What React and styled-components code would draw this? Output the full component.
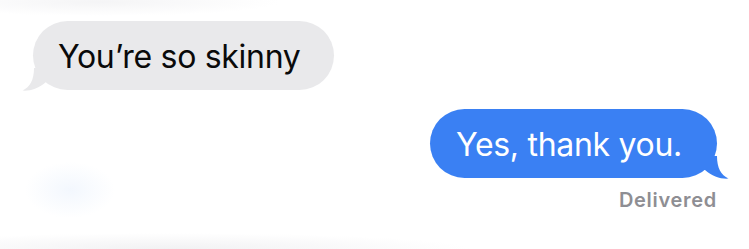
import styled, { createGlobalStyle } from "styled-components";

const GlobalStyle = createGlobalStyle`
  html, body {
    margin: 0;
    padding: 0;
    background: #fff;
  }
  body {
    font-family: Inter, "Open Sans", "Liberation Sans", sans-serif;
    -webkit-font-smoothing: antialiased;
  }
`;

const Thread = styled.div`
  width: 749px;
  height: 249px;
  box-sizing: border-box;
  padding: 21px 32px 0 33px;
  display: flex;
  flex-direction: column;
  overflow: hidden;
  background:
    radial-gradient(ellipse 45px 28px at 70px 190px, rgba(228, 238, 252, 0.45), transparent),
    radial-gradient(ellipse 300px 16px at 170px 249px, rgba(238, 238, 240, 0.8), transparent),
    radial-gradient(ellipse 180px 14px at 100px 2px, rgba(240, 240, 242, 0.7), transparent),
    #fff;
`;

const Row = styled.div`
  display: flex;
  justify-content: ${p => (p.$mine ? "flex-end" : "flex-start")};
  margin-top: ${p => p.$gap || 0}px;
`;

const Bubble = styled.div`
  position: relative;
  height: 69px;
  box-sizing: border-box;
  padding: ${p => (p.$mine ? "0 35px 0 26px" : "0 34px 0 25px")};
  border-radius: 35px;
  background: ${p => (p.$mine ? "#3a80f3" : "#e9e9eb")};
  color: ${p => (p.$mine ? "#fff" : "#0a0a0a")};
  font-size: 32px;
  line-height: 71px;
  letter-spacing: -0.3px;
  white-space: nowrap;
`;

const TailSvg = styled.svg`
  position: absolute;
  bottom: -1px;
  ${p => (p.$mine ? "right: -12px;" : "left: -11px; transform: scaleX(-1);")}
`;

const Status = styled.div`
  align-self: flex-end;
  margin-top: 10px;
  margin-right: 0;
  font-size: 20px;
  font-weight: 600;
  color: #8e8e93;
  letter-spacing: 0.7px;
`;

const Tail = ({ mine, color }) => (
  <TailSvg $mine={mine} width="32" height="23" viewBox="0 0 32 23">
    <path
      d="M0 0 H20 C20 12 24 19 31.5 22.6 C24 23.2 15 20.5 8 14 L0 14 Z"
      fill={color}
    />
  </TailSvg>
);

const App = () => {
  return (
    <>
      <GlobalStyle />
      <Thread>
        <Row>
          <Bubble>
            You’re so skinny
            <Tail color="#e9e9eb" />
          </Bubble>
        </Row>
        <Row $mine $gap={19}>
          <Bubble $mine>
            Yes, thank you.
            <Tail mine color="#3a80f3" />
          </Bubble>
        </Row>
        <Status>Delivered</Status>
      </Thread>
    </>
  );
};

export default App;
